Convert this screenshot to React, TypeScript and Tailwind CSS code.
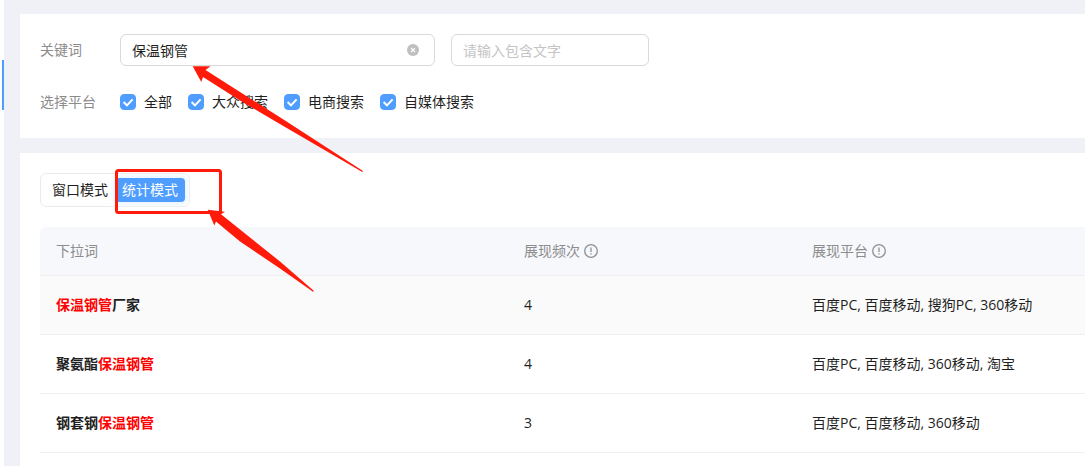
import { useState } from 'react'

const platforms = ['全部', '大众搜索', '电商搜索', '自媒体搜索']

const modes = ['窗口模式', '统计模式']

const rows = [
  { before: '', after: '厂家', count: 4, places: '百度PC, 百度移动, 搜狗PC, 360移动' },
  { before: '聚氨酯', after: '', count: 4, places: '百度PC, 百度移动, 360移动, 淘宝' },
  { before: '钢套钢', after: '', count: 3, places: '百度PC, 百度移动, 360移动' },
]

function InfoIcon() {
  return (
    <svg className="h-[14px] w-[14px]" viewBox="0 0 14 14" fill="none" stroke="#8f9093" aria-hidden="true">
      <circle cx="7" cy="7" r="6.3" strokeWidth="1.3" />
      <path d="M7 3.4v4.6M7 9.2v1.4" strokeWidth="1.3" />
    </svg>
  )
}

function PlatformCheck({ label }: { label: string }) {
  return (
    <label className="flex items-center gap-2">
      <span className="relative h-4 w-4">
        <input
          type="checkbox"
          defaultChecked
          className="peer block h-4 w-4 appearance-none rounded border border-[#d9d9d9] checked:border-[#4e9dff] checked:bg-[#4e9dff]"
        />
        <svg className="pointer-events-none absolute inset-0 hidden peer-checked:block" viewBox="0 0 16 16" fill="none">
          <path d="M3.6 8l3.4 3.4 5.6-6" stroke="#fff" strokeWidth="2" />
        </svg>
      </span>
      {label}
    </label>
  )
}

export default function App() {
  const [keyword, setKeyword] = useState('保温钢管')
  const [mode, setMode] = useState('统计模式')

  return (
    <div className="relative flex min-h-screen overflow-hidden bg-[#f0f1f6] font-['Open_Sans','Noto_Sans_CJK_SC',sans-serif] text-sm text-[#1f1f1f]">
      {/* 侧栏边缘 */}
      <div className="flex w-1 shrink-0 justify-end bg-white pt-[60px]">
        <div className="h-[50px] w-0.5 bg-[#4e9dff]" />
      </div>

      <main className="ml-4 flex min-w-0 grow flex-col gap-[15px] pt-[14px]">
        {/* 搜索条件 */}
        <section className="flex flex-col gap-5 bg-white p-5">
          <div className="flex h-8 items-center">
            <label htmlFor="keyword" className="w-20 shrink-0 text-[#8c8c8c]">关键词</label>
            <div className="relative mr-4 w-[315px]">
              <input
                id="keyword"
                value={keyword}
                onChange={(e) => setKeyword(e.target.value)}
                className="block h-8 w-full rounded-md border border-[#d9d9d9] bg-white pr-8 pl-[11px] outline-none"
              />
              <button
                type="button"
                aria-label="清空"
                onClick={() => setKeyword('')}
                className="absolute top-2.5 right-4 h-3 w-3"
              >
                <svg viewBox="0 0 12 12" fill="none">
                  <circle cx="6" cy="6" r="6" fill="#bfbfbf" />
                  <path d="M4 4l4 4M8 4l-4 4" stroke="#fff" strokeWidth="1.1" />
                </svg>
              </button>
            </div>
            <input
              aria-label="包含文字"
              placeholder="请输入包含文字"
              className="h-8 w-[198px] rounded-md border border-[#d9d9d9] bg-white px-[11px] outline-none placeholder:text-[#c4c4c4]"
            />
          </div>
          <div className="flex h-8 items-center">
            <span className="w-20 shrink-0 text-[#8c8c8c]">选择平台</span>
            <div className="flex gap-4">
              {platforms.map((p) => (
                <PlatformCheck key={p} label={p} />
              ))}
            </div>
          </div>
        </section>

        {/* 结果 */}
        <section className="grow bg-white pt-5 pl-5">
          <div className="inline-flex rounded-md border border-[#ebebeb] p-1 align-top">
            {modes.map((m) => (
              <button
                key={m}
                type="button"
                onClick={() => setMode(m)}
                className={
                  mode === m
                    ? 'h-6 rounded bg-[#4e9dff] px-[7px] text-white shadow-[0_0_4px_3px_#edf6ff]'
                    : 'h-6 rounded px-[7px]'
                }
              >
                {m}
              </button>
            ))}
          </div>

          <table className="mt-5 w-full table-fixed border-separate border-spacing-0 text-left">
            <thead>
              <tr className="h-[49px] text-[#8c8c8c]">
                <th className="w-[468px] rounded-tl-md border-b border-[#efefef] bg-[#f7f8fc] px-4 font-normal">下拉词</th>
                <th className="w-[288px] border-b border-[#efefef] bg-[#f7f8fc] px-4 font-normal">
                  <span className="flex items-center gap-1">展现频次<InfoIcon /></span>
                </th>
                <th className="border-b border-[#efefef] bg-[#f7f8fc] px-4 font-normal">
                  <span className="flex items-center gap-1">展现平台<InfoIcon /></span>
                </th>
              </tr>
            </thead>
            <tbody>
              {rows.map((row) => (
                <tr key={row.before + row.after} className="h-[59px] first:bg-[#fafafa]">
                  <td className="border-b border-[#efefef] px-4 font-bold">
                    {row.before}<span className="text-[#ff0000]">保温钢管</span>{row.after}
                  </td>
                  <td className="border-b border-[#efefef] px-4">{row.count}</td>
                  <td className="border-b border-[#efefef] px-4">{row.places}</td>
                </tr>
              ))}
            </tbody>
          </table>
        </section>
      </main>

      {/* 红色标注 */}
      <svg
        className="pointer-events-none absolute top-0 left-0"
        width="400"
        height="300"
        viewBox="0 0 400 300"
        fill="#ff1a0a"
        aria-hidden="true"
      >
        <rect x="116.5" y="170.5" width="104" height="42" rx="2" fill="none" stroke="#ff1a0a" strokeWidth="3" />
        <path d="M192.7 66.3H210.5L205.5 70L240 92L285 120.5L363 171L362.3 172L285 127L240 100.5L203 77L201.3 82Z" />
        <path d="M207.7 209.7L225 211.7L221 214.2L240 229.5L280 261.5L314 291L313 291.8L280 268.5L240 241.5L216 221.5L214.3 225.5Z" />
      </svg>
    </div>
  )
}
